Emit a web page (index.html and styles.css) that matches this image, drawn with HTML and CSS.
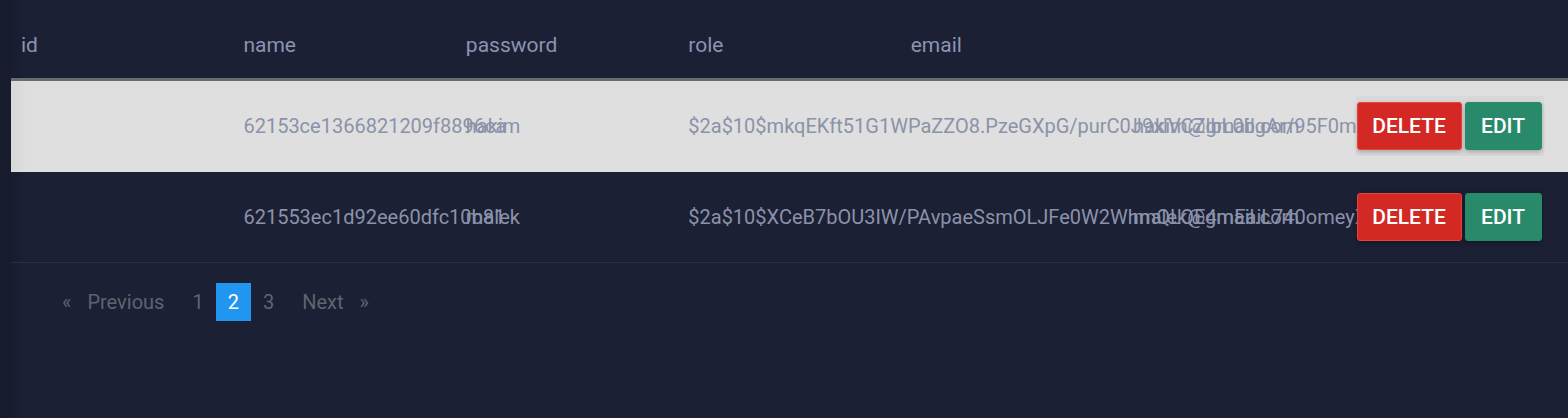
FILE: index.html
```html
<!DOCTYPE html>
<html>
<head>
<meta charset="utf-8">
<link rel="stylesheet" href="styles.css">
</head>
<body>
<div class="page">
  <table class="users">
    <thead>
      <tr>
        <th>id</th>
        <th>name</th>
        <th>password</th>
        <th>role</th>
        <th>email</th>
        <th></th>
        <th></th>
      </tr>
    </thead>
    <tbody>
      <tr class="row-light">
        <td></td>
        <td>62153ce1366821209f8896ca</td>
        <td>hakim</td>
        <td>$2a$10$mkqEKft51G1WPaZZO8.PzeGXpG/purC0J9xlVCZlbL0bgAr/95F0mFI/Gx</td>
        <td></td>
        <td>hakim@gmail.com</td>
        <td>
          <div class="actions">
            <button class="btn btn-delete">DELETE</button>
            <button class="btn btn-edit">EDIT</button>
          </div>
        </td>
      </tr>
      <tr class="row-dark">
        <td></td>
        <td>621553ec1d92ee60dfc10b81</td>
        <td>malek</td>
        <td>$2a$10$XCeB7bOU3IW/PAvpaeSsmOLJFe0W2WhmQLQE4mEaiL740omeyXO8</td>
        <td></td>
        <td>malek@gmail.com</td>
        <td>
          <div class="actions">
            <button class="btn btn-delete">DELETE</button>
            <button class="btn btn-edit">EDIT</button>
          </div>
        </td>
      </tr>
    </tbody>
  </table>

  <nav class="pager">
    <span class="pager-arrow">«</span>
    <a class="pager-item pager-step">Previous</a>
    <a class="pager-item">1</a>
    <a class="pager-item is-active">2</a>
    <a class="pager-item">3</a>
    <a class="pager-item pager-step">Next</a>
    <span class="pager-arrow">»</span>
  </nav>
</div>
</body>
</html>
```

FILE: styles.css
```css
html, body {
  margin: 0;
  padding: 0;
}

body {
  background: linear-gradient(to right, #171b2c 0, #181c2f 11px, #1b2035 28px, #1b2035 100%);
  font-family: Roboto, "Liberation Sans", sans-serif;
  height: 418px;
  overflow: hidden;
}

.page {
  padding-left: 11px;
}

.users {
  width: 100%;
  table-layout: fixed;
  border-collapse: collapse;
}

.users th {
  text-align: left;
  font-weight: 400;
  font-size: 21px;
  line-height: 24px;
  color: #8b94b0;
  padding: 33px 10px 21px;
  border-bottom: 3px solid #6b6b6b;
  white-space: nowrap;
}

.users td {
  height: 90px;
  padding: 0 10px;
  font-size: 20px;
  line-height: 24px;
  color: #8b92a9;
  white-space: nowrap;
  vertical-align: middle;
  border-bottom: 1px solid #2a2f45;
}

.row-light td {
  background: #dfdfdf;
  border-bottom-color: #dfdfdf;
}

.row-light td:first-child {
  background: linear-gradient(to right, #d8d8d8 0, #dddddd 14px, #dfdfdf 30px);
}

.actions {
  display: inline-flex;
  vertical-align: middle;
  gap: 3px;
  padding: 6px 2px 6px 1px;
  background: rgba(0, 0, 0, 0.03);
}

.btn {
  height: 48px;
  border-radius: 3px;
  font-family: Roboto, "Liberation Sans", sans-serif;
  font-size: 21px;
  font-weight: 500;
  color: #ffffff;
  text-align: center;
  padding: 0;
  cursor: pointer;
  box-shadow: 0 2px 4px rgba(0, 0, 0, 0.22);
}

.btn-delete {
  width: 105px;
  background: #d32824;
  border: 1px solid #e8443b;
}

.btn-edit {
  width: 77px;
  background: #288a6b;
  border: 1px solid #288a6b;
}

.pager {
  display: flex;
  align-items: center;
  margin-top: 20px;
  padding-left: 51px;
  font-size: 20px;
  line-height: 24px;
  color: #60636f;
}

.pager-arrow {
  display: block;
}

.pager-item {
  display: block;
  padding: 7px 12px;
  color: #60636f;
}

.pager-step {
  margin: 0 4px;
}

.pager-item.is-active {
  background: #2196f0;
  color: #ffffff;
}
```
